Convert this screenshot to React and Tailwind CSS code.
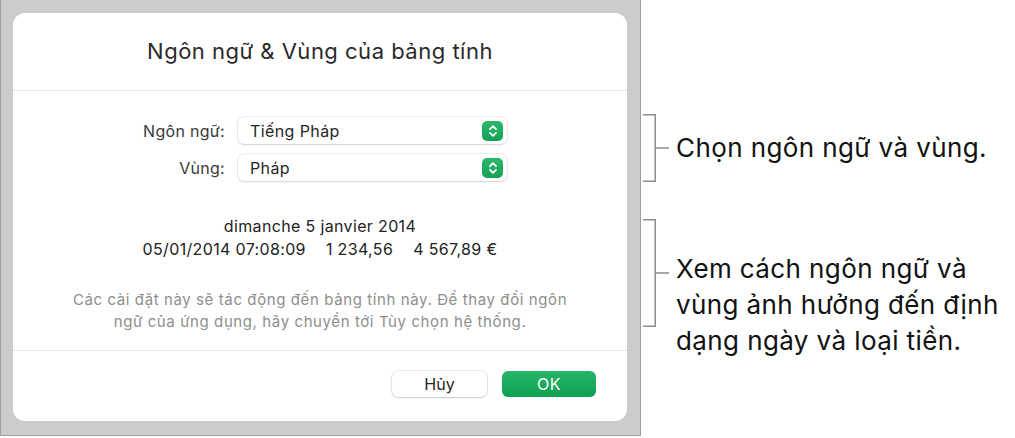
function Stepper() {
  return (
    <div className="flex h-[20px] w-[21px] items-center justify-center rounded-[5px] bg-gradient-to-b from-[#2bb86c] to-[#14a156]">
      <svg width="10" height="14" viewBox="0 0 10 14" fill="none">
        <path d="M2 5.2 L5 2.2 L8 5.2" stroke="white" strokeWidth="1.8" strokeLinecap="round" strokeLinejoin="round" />
        <path d="M2 8.8 L5 11.8 L8 8.8" stroke="white" strokeWidth="1.8" strokeLinecap="round" strokeLinejoin="round" />
      </svg>
    </div>
  );
}

function PopupRow({ label, value }) {
  return (
    <div className="flex items-center">
      <div className="w-[225px] pr-[13px] text-right text-[16px] tracking-[0.3px] text-[#3a3a3a]">{label}</div>
      <div className="flex h-[27px] w-[269px] items-center justify-between rounded-[6px] bg-white pl-[12px] pr-[4px] shadow-[0_0_0_0.5px_rgba(0,0,0,0.12),0_1px_2px_rgba(0,0,0,0.12)]">
        <span className="text-[16px] tracking-[0.4px] text-[#262626]">{value}</span>
        <Stepper />
      </div>
    </div>
  );
}

function Bracket({ height }) {
  const mid = height / 2;
  return (
    <svg width="27" height={height} viewBox={`0 0 27 ${height}`} className="shrink-0">
      <path
        d={`M1 0.75 H13.25 V${height - 0.75} H1 M13.25 ${mid} H27`}
        fill="none"
        stroke="#8c8c8c"
        strokeWidth="1.5"
      />
    </svg>
  );
}

export default function App() {
  return (
    <div className="flex h-[438px] w-[1015px] bg-white font-['Inter',sans-serif]">
      {/* grey window backdrop */}
      <div className="h-[436px] w-[641px] shrink-0 border border-t-0 border-[#9d9d9d] bg-[#cccccc] pt-[13px] pl-[12px]">
        <div className="flex h-[408px] w-[614px] flex-col rounded-[12px] bg-white">
          <div className="flex h-[78px] items-center justify-center border-b border-[#e6e6e6]">
            <h1 className="text-[22px] tracking-[0.5px] text-[#2a2a2a]">Ngôn ngữ &amp; Vùng của bảng tính</h1>
          </div>

          <div className="flex flex-1 flex-col border-b border-[#e6e6e6] pt-[26px]">
            <div className="flex flex-col gap-[10px]">
              <PopupRow label="Ngôn ngữ:" value="Tiếng Pháp" />
              <PopupRow label="Vùng:" value="Pháp" />
            </div>

            <div className="mt-[34px] flex flex-col items-center text-[16px] leading-[23px] tracking-[0.35px] text-[#222]">
              <div>dimanche 5 janvier 2014</div>
              <div className="flex gap-[20px]">
                <span>05/01/2014 07:08:09</span>
                <span>1 234,56</span>
                <span>4 567,89 €</span>
              </div>
            </div>

            <p className="mt-[28px] text-center text-[15px] leading-[22px] tracking-[0.6px] text-[#8e8e8e]">
              Các cài đặt này sẽ tác động đến bảng tính này. Để thay đổi ngôn
              <br />
              ngữ của ứng dụng, hãy chuyển tới Tùy chọn hệ thống.
            </p>
          </div>

          <div className="flex h-[70px] items-start justify-end gap-[15px] pt-[20px] pr-[31px]">
            <button className="h-[26px] w-[95px] rounded-[6px] bg-white text-[16px] text-[#262626] shadow-[0_0_0_0.5px_rgba(0,0,0,0.15),0_1px_2px_rgba(0,0,0,0.15)]">
              Hủy
            </button>
            <button className="h-[26px] w-[94px] rounded-[6px] bg-gradient-to-b from-[#27b56a] to-[#0c9f52] text-[16px] tracking-[0.5px] text-white">
              OK
            </button>
          </div>
        </div>
      </div>

      {/* callouts */}
      <div className="flex flex-col pt-[114px] pl-[1px]">
        <div className="flex items-start">
          <Bracket height={68} />
          <p className="mt-[16px] pl-[7px] text-[26px] leading-[36px] tracking-[0.4px] text-[#111]">Chọn ngôn ngữ và vùng.</p>
        </div>
        <div className="mt-[37px] flex items-start">
          <Bracket height={108} />
          <p className="mt-[32px] pl-[7px] text-[26px] leading-[36px] tracking-[0.4px] text-[#111]">
            Xem cách ngôn ngữ và
            <br />
            vùng ảnh hưởng đến định
            <br />
            dạng ngày và loại tiền.
          </p>
        </div>
      </div>
    </div>
  );
}
